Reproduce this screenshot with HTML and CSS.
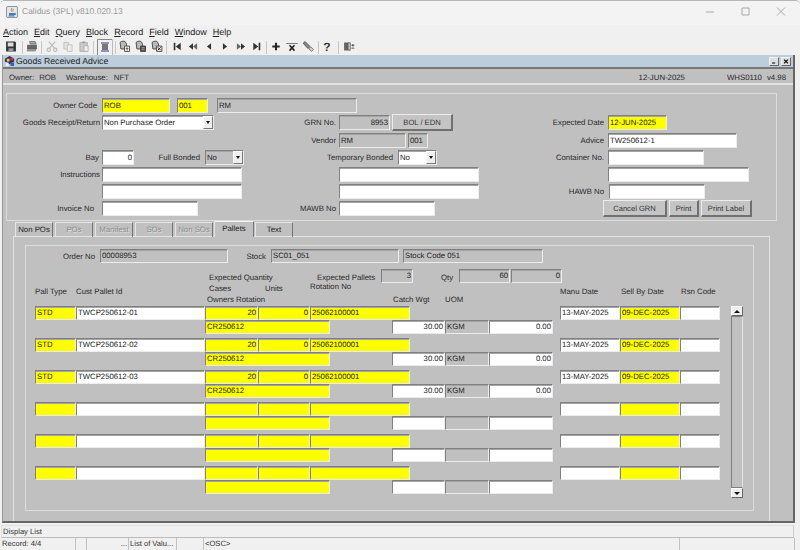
FILE: index.html
```html
<!DOCTYPE html>
<html lang="en">
<head>
<meta charset="utf-8">
<title>Calidus (3PL) v810.020.13</title>
<link rel="stylesheet" href="styles.css">
</head>
<body>
<div class="app">
  <header class="titlebar">
    <svg class="appicon" viewBox="0 0 12 12"><rect x=".5" y=".5" width="11" height="11" rx="1.5" fill="#dfe7ef" stroke="#8a97a3"/><path d="M3 7h5v2.5H3z" fill="#4a78b0"/><path d="M8 7.5h1.5v1H8M2.500 10h6" stroke="#4a78b0" fill="none"/><path d="M5.500 2c1 1.200-1 2 0 3.500M7 3c.6.800-.6 1.400 0 2.500" stroke="#d9741f" fill="none"/></svg>
    <span class="apptitle">Calidus (3PL) v810.020.13</span>
    <svg class="wincontrols" viewBox="0 0 90 10"><path d="M0 5h8M36 1h7v7h-7zM71 .5l8 8M79 .5l-8 8" stroke="#a8a8a8" fill="none"/></svg>
  </header>

  <nav class="menubar">
    <span><u>A</u>ction</span><span><u>E</u>dit</span><span><u>Q</u>uery</span><span><u>B</u>lock</span><span><u>R</u>ecord</span><span><u>F</u>ield</span><span><u>W</u>indow</span><span><u>H</u>elp</span>
  </nav>

  <div class="toolbar">
    <svg class="ti" viewBox="0 0 16 16"><path d="M2 2h11l1 1v11H2z" fill="#333"/><path d="M4 3h7v5H4z" fill="#ddd"/><path d="M5 10h6v4H5z" fill="#999"/></svg>
    <i class="sep s1"></i>
    <svg class="ti" viewBox="0 0 16 16"><path d="M5 2h7l1 3H6z" fill="#aaa" stroke="#444" stroke-width=".7"/><path d="M2 6h12v5H2z" fill="#666"/><path d="M3 11h10l-1 2.500H2z" fill="#aaa" stroke="#555" stroke-width=".6"/></svg>
    <i class="sep s2"></i>
    <svg class="ti" viewBox="0 0 16 16"><path d="M4 2l7 8M12 2l-7 8" stroke="#b8b8b8" stroke-width="1.300"/><circle cx="4" cy="12" r="2" fill="none" stroke="#b8b8b8" stroke-width="1.300"/><circle cx="12" cy="12" r="2" fill="none" stroke="#b8b8b8" stroke-width="1.300"/></svg>
    <svg class="ti" viewBox="0 0 16 16"><path d="M3 3h6v8H3z" fill="#e4e4e4" stroke="#bbb"/><path d="M7 6h6v8H7z" fill="#ececec" stroke="#bbb"/></svg>
    <svg class="ti" viewBox="0 0 16 16"><path d="M3 3h9v11H3z" fill="#ccc" stroke="#aaa"/><path d="M6 2h3v2H6z" fill="#999"/><path d="M8 7h5v7H8z" fill="#eee" stroke="#aaa"/></svg>
    <i class="sep s3"></i>
    <svg class="ti pressed" viewBox="0 0 16 16"><path d="M1 .5h14.500V16" stroke="#bbb" fill="none"/><path d="M.5 16V.5H15" stroke="#888" fill="none"/><path d="M4 3.500h8v1H4z" fill="#35358f"/><path d="M5 5h6v6H5z" fill="#777"/><path d="M4 11.500h8v1H4z" fill="#35358f"/></svg>
    <i class="sep s4"></i>
    <svg class="ti" viewBox="0 0 16 16"><path d="M2 3c2-2 6-2 7 0l1 3v5H3z" fill="#bbb" stroke="#333"/><path d="M7.500 7.500h6v6.500h-6z" fill="#fff" stroke="#333"/><path d="M10.500 13V9.500M9 11l1.500-1.500L12 11" stroke="#333" fill="none"/></svg>
    <svg class="ti" viewBox="0 0 16 16"><path d="M2 3c2-2 6-2 7 0l1 3v5H3z" fill="#bbb" stroke="#333"/><path d="M7.500 7.500h6v6.500h-6z" fill="#555" stroke="#333"/><path d="M9 9h1v1H9zM11 9h1v1h-1zM9 11h1v1H9zM11 11h1v1h-1z" fill="#ddd"/></svg>
    <svg class="ti" viewBox="0 0 16 16"><path d="M2 3c2-2 6-2 7 0l1 3v5H3z" fill="#bbb" stroke="#333"/><path d="M7.500 7.500h6.500v6.500H7.500z" fill="#eee" stroke="#333"/><path d="M9 9l3.500 3.500M12.500 9L9 12.500" stroke="#222" stroke-width="1.200"/></svg>
    <i class="sep s5"></i>
    <svg class="ti" viewBox="0 0 16 16"><path d="M4 3.500h2v9H4zM12.500 3.500v9L6.500 8z" fill="#333"/></svg>
    <svg class="ti" viewBox="0 0 16 16"><path d="M8 4v8L3 8z" fill="#333"/><path d="M13 4v8L8 8z" fill="#666"/></svg>
    <svg class="ti" viewBox="0 0 16 16"><path d="M10.500 4v8L5.500 8z" fill="#333"/></svg>
    <svg class="ti" viewBox="0 0 16 16"><path d="M5.500 4v8l5-4z" fill="#333"/></svg>
    <svg class="ti" viewBox="0 0 16 16"><path d="M3 4v8l5-4z" fill="#666"/><path d="M8 4v8l5-4z" fill="#333"/></svg>
    <svg class="ti" viewBox="0 0 16 16"><path d="M3.500 3.500v9l6-4.500zM10 3.500h2v9h-2z" fill="#333"/></svg>
    <i class="sep s6"></i>
    <svg class="ti" viewBox="0 0 16 16"><path d="M6.800 3.500h2.400v3.300h3.300v2.400H9.200v3.300H6.800V9.200H3.500V6.800h3.300z" fill="#222"/></svg>
    <svg class="ti" viewBox="0 0 16 16"><path d="M1 4h14v1H1z" fill="#555"/><path d="M5 6.500l6 6.500M11 6.500L5 13" stroke="#222" stroke-width="2"/></svg>
    <svg class="ti" viewBox="0 0 16 16"><path d="M2 4l2.500-2 6 6-2.500 2.500z" fill="#888" stroke="#333" stroke-width=".8"/><path d="M9 11l2.500-2.500 3 3-2 2.500z" fill="#ccc" stroke="#444" stroke-width=".7"/></svg>
    <i class="sep s7"></i>
    <span class="help">?</span>
    <i class="sep s8"></i>
    <svg class="ti" viewBox="0 0 16 16"><path d="M2 3h5v10H2z" fill="#666"/><path d="M7 3.500h2.500v9H7z" fill="#ddd" stroke="#555"/><path d="M11 6.500h3.500M12.700 5v3M11 10h3.500" stroke="#333" fill="none"/></svg>
  </div>

  <main class="child">
    <div class="childtitle">
      <svg class="childicon" viewBox="0 0 12 12"><path d="M1 3l5-3 5 3v3l-5 3-5-3z" fill="#2b2b6f"/><path d="M3 3h3v3H3z" fill="#f2d21a"/><path d="M7 2h3v3H7z" fill="#d33"/><path d="M2 7h3v4H2z" fill="#eee"/><path d="M7 7h4v4H7z" fill="#36a"/></svg>
      <span class="childname">Goods Received Advice</span>
      <span class="cbtn"><svg viewBox="0 0 9 9"><path d="M2 6.500h4" stroke="#000" stroke-width="1.400"/></svg></span>
      <span class="cbtn"><svg viewBox="0 0 9 9"><path d="M2 2l5 5M7 2L2 7" stroke="#000" stroke-width="1.400"/></svg></span>
    </div>

    <div class="infobar">
      <span class="i-owner">Owner:</span><span class="i-rob">ROB</span><span class="i-wh">Warehouse:</span><span class="i-nft">NFT</span>
      <span class="i-date">12-JUN-2025</span><span class="i-form">WHS0110</span><span class="i-ver">v4.98</span>
    </div>

    <div class="canvas">
      <section class="topframe">
        <div class="col col-left">
          <div class="row"><label class="lb pr5">Owner Code</label><div class="f y w68">ROB</div><div class="f y w31 ml7">001</div><div class="f g w140 ml9">RM</div></div>
          <div class="row"><label class="lb">Goods Receipt/Return</label><div class="f w w112 sel">Non Purchase Order<span class="drop"></span></div></div>
          <div class="row"></div>
          <div class="row"><label class="lb pr3">Bay</label><div class="f w w32 num">0</div><label class="lb-inline">Full Bonded</label><div class="f g w39 sel">No<span class="drop"></span></div></div>
          <div class="row"><label class="lb">Instructions</label><div class="f w w140"></div></div>
          <div class="row"><label class="lb"></label><div class="f w w140"></div></div>
          <div class="row"><label class="lb pr8">Invoice No</label><div class="f w w96"></div></div>
        </div>
        <div class="col col-mid">
          <div class="row"></div>
          <div class="row"><label class="lm">GRN No.</label><div class="f g w51 num">8953</div><button class="btn b-bol">BOL / EDN</button></div>
          <div class="row"><label class="lm">Vendor</label><div class="f g w67">RM</div><div class="f g w20 ml2">001</div></div>
          <div class="row"><label class="lm wide">Temporary Bonded</label><div class="f w w39 sel">No<span class="drop"></span></div></div>
          <div class="row"><label class="lm"></label><div class="f w w140"></div></div>
          <div class="row"><label class="lm"></label><div class="f w w140"></div></div>
          <div class="row"><label class="lm">MAWB No</label><div class="f w w96"></div></div>
        </div>
        <div class="col col-right">
          <div class="row"></div>
          <div class="row"><label class="lr">Expected Date</label><div class="f y w59">12-JUN-2025</div></div>
          <div class="row"><label class="lr">Advice</label><div class="f w w129">TW250612-1</div></div>
          <div class="row"><label class="lr">Container No.</label><div class="f w w96"></div></div>
          <div class="row"><label class="lr"></label><div class="f w w141"></div></div>
          <div class="row"><label class="lr">HAWB No</label><div class="f w w96 ml1"></div></div>
          <div class="row btnrow"><button class="btn b-cancel">Cancel GRN</button><button class="btn b-print">Print</button><button class="btn b-label">Print Label</button></div>
        </div>
      </section>

      <div class="tabs">
        <span class="tab">Non POs</span><span class="tab off">POs</span><span class="tab off t-man">Manifest</span><span class="tab off">SOs</span><span class="tab off">Non SOs</span><span class="tab on">Pallets</span><span class="tab">Text</span>
      </div>

      <section class="tabpanel">
        <div class="innerframe">
          <div class="orderrow">
            <label class="lo">Order No</label><div class="f g w128">00008953</div>
            <label class="ls">Stock</label><div class="f g w128">SC01_051</div><div class="f g w140 ml4">Stock Code 051</div>
          </div>
          <div class="headgrid">
            <span class="h c3 r1 ind2 sp">Expected Quantity</span>
            <span class="h c5 r1 ind7 sp">Expected Pallets</span>
            <div class="f g w32 c6 r1 num">3</div>
            <span class="h c8 r1">Qty</span>
            <div class="qty c10 r1"><div class="f g w51 num">60</div><div class="f g w51 num">0</div></div>
            <span class="h c3 r2 ind2">Cases</span>
            <span class="h c4 r2">Units</span>
            <span class="h c5 r2 up">Rotation No</span>
            <span class="h c1 r2 dn">Pall Type</span>
            <span class="h c2 r2 dn">Cust Pallet Id</span>
            <span class="h c11 r2 dn mdate">Manu Date</span>
            <span class="h c12 r2 dn">Sell By Date</span>
            <span class="h c13 r2 dn">Rsn Code</span>
            <span class="h c3 r3 sp">Owners Rotation</span>
            <span class="h c7 r3 sp">Catch Wgt</span>
            <span class="h c9 r3 sp">UOM</span>
          </div>
          <div class="tablewrap">
            <div class="records">
              <div class="rec">
                <div class="line1"><div class="f y">STD</div><div class="f w">TWCP250612-01</div><div class="f y num">20</div><div class="f y num">0</div><div class="f y">25062100001</div><i></i><div class="f w">13-MAY-2025</div><div class="f y">09-DEC-2025</div><div class="f w"></div></div>
                <div class="line2"><div class="f y">CR250612</div><i></i><div class="f w num">30.00</div><div class="f g">KGM</div><div class="f w num">0.00</div></div>
              </div>
              <div class="rec">
                <div class="line1"><div class="f y">STD</div><div class="f w">TWCP250612-02</div><div class="f y num">20</div><div class="f y num">0</div><div class="f y">25062100001</div><i></i><div class="f w">13-MAY-2025</div><div class="f y">09-DEC-2025</div><div class="f w"></div></div>
                <div class="line2"><div class="f y">CR250612</div><i></i><div class="f w num">30.00</div><div class="f g">KGM</div><div class="f w num">0.00</div></div>
              </div>
              <div class="rec">
                <div class="line1"><div class="f y">STD</div><div class="f w">TWCP250612-03</div><div class="f y num">20</div><div class="f y num">0</div><div class="f y">25062100001</div><i></i><div class="f w">13-MAY-2025</div><div class="f y">09-DEC-2025</div><div class="f w"></div></div>
                <div class="line2"><div class="f y">CR250612</div><i></i><div class="f w num">30.00</div><div class="f g">KGM</div><div class="f w num">0.00</div></div>
              </div>
              <div class="rec">
                <div class="line1"><div class="f y"></div><div class="f w"></div><div class="f y"></div><div class="f y"></div><div class="f y"></div><i></i><div class="f w"></div><div class="f y"></div><div class="f w"></div></div>
                <div class="line2"><div class="f y"></div><i></i><div class="f w"></div><div class="f g"></div><div class="f w"></div></div>
              </div>
              <div class="rec">
                <div class="line1"><div class="f y"></div><div class="f w"></div><div class="f y"></div><div class="f y"></div><div class="f y"></div><i></i><div class="f w"></div><div class="f y"></div><div class="f w"></div></div>
                <div class="line2"><div class="f y"></div><i></i><div class="f w"></div><div class="f g"></div><div class="f w"></div></div>
              </div>
              <div class="rec">
                <div class="line1"><div class="f y"></div><div class="f w"></div><div class="f y"></div><div class="f y"></div><div class="f y"></div><i></i><div class="f w"></div><div class="f y"></div><div class="f w"></div></div>
                <div class="line2"><div class="f y"></div><i></i><div class="f w"></div><div class="f g"></div><div class="f w"></div></div>
              </div>
            </div>
            <div class="scroll"><span class="sb up-arrow"></span><span class="track"></span><span class="sb down-arrow"></span></div>
          </div>
        </div>
      </section>
    </div>
  </main>

  <footer class="status">
    <div class="hint">Display List</div>
    <div class="stat">
      <span class="st1">Record: 4/4</span><span class="st2"></span><span class="st3">...</span><span class="st4">List of Valu...</span><span class="st5"></span><span class="st6">&lt;OSC&gt;</span><span class="st7"></span>
    </div>
  </footer>
</div>
</body>
</html>
```
FILE: styles.css
```css
* { box-sizing: border-box; }
html, body { margin: 0; padding: 0; background: #f0f0f0; }
body { font: 7.8px/11px "Liberation Sans", Arial, sans-serif; color: #2a2a2a; text-rendering: geometricPrecision; }
.app { width: 800px; height: 550px; overflow: hidden; display: flex; flex-direction: column; background: #f0f0f0; border-top: 1px solid #b5b5b5; border-radius: 5px 5px 0 0; }

/* window chrome */
.titlebar { flex: 0 0 24px; display: flex; align-items: center; padding: 0 0 3px 6px; background: #f3f3f3; }
.appicon { width: 12px; height: 12px; }
.apptitle { margin-left: 4px; font-size: 8.5px; color: #9a9a9a; }
.wincontrols { width: 90px; height: 10px; margin-left: auto; margin-right: 4px; }
.menubar { flex: 0 0 14px; display: flex; align-items: center; padding-left: 3px; gap: 6px; font-size: 9px; color: #222; }
.toolbar { flex: 0 0 16px; display: flex; align-items: center; padding-left: 3px; }
.ti { width: 16px; height: 16px; flex: none; transform: translateY(-.5px) scale(.82); }
.ti.pressed { transform: none; }
.sep { width: 1px; height: 13px; background: #c8c8c8; flex: none; }
.s1 { margin: 0 1px 0 3px; }
.s2 { margin: 0 2px 0 1px; }
.s3 { margin: 0 3px 0 1px; }
.s4 { margin: 0 1px 0 2px; }
.s5 { margin: 0 2px 0 1px; }
.s6 { margin: 0 1px 0 1px; }
.s7 { margin: 0 0 0 2px; }
.s8 { margin: 0 2px 0 3px; }
.help { width: 16px; text-align: center; font: bold 12px/15px "Liberation Sans", sans-serif; color: #333; }

/* MDI child */
.child { width: 793px; margin-left: 2px; flex: 0 0 468px; display: flex; flex-direction: column; border-right: 2px solid #666; border-bottom: 2px solid #666; border-left: 1px solid #999; background: #c0c0c0; }
.childtitle { flex: 0 0 14px; display: flex; align-items: center; background: #bccddb; border-bottom: 2px solid #777; padding: 0 2px 0 0; font-size: 8.7px; color: #222; }
.childicon { width: 11px; height: 11px; margin-left: 1px; }
.childname { margin: 0 auto 0 1px; }
.cbtn { width: 10px; height: 9px; margin-left: 2px; background: #dedede; border: 1px solid; border-color: #f4f4f4 #666 #666 #f4f4f4; display: block; }
.cbtn svg { display: block; width: 8px; height: 7px; }
.infobar { flex: 0 0 15px; display: flex; align-items: center; border-bottom: 2px solid #e2e2e2; padding: 3px 0 0 6px; }
.i-rob { margin-left: 5px; }
.i-wh { margin-left: 10px; }
.i-nft { margin-left: 6px; }
.i-date { margin-left: auto; margin-right: 42px; }
.i-ver { margin-left: 5px; margin-right: 7px; }

.canvas { flex: 1; display: flex; flex-direction: column; }
.topframe { width: 771px; height: 128px; margin: 8px 0 0 3px; border: 1px solid #dcdcdc; display: flex; padding-top: 4px; }
.col { display: grid; grid-template-rows: 17px 18px 17px 17px 17px 17px 17px; }
.col-left { width: 283px; }
.col-mid { width: 200px; }
.col-right { flex: 1; }
.row { display: flex; align-items: flex-start; }

.lb { width: 95px; text-align: right; padding-right: 2px; line-height: 16px; flex: none; }
.pr3 { padding-right: 3px; }
.pr5 { padding-right: 5px; }
.pr8 { padding-right: 8px; }
.lb-inline { width: 71px; padding-right: 5px; text-align: right; line-height: 16px; flex: none; }
.lm { width: 49px; text-align: right; padding-right: 3px; line-height: 16px; flex: none; white-space: nowrap; }
.lm.wide { width: 108px; padding-right: 5px; }
.lr { width: 118px; text-align: right; padding-right: 4px; line-height: 16px; flex: none; }

/* fields */
.f { height: 15px; padding: 0 1px; font-size: 7.75px; line-height: 11px; color: #222; border: 1px solid; border-color: #808080 #ececec #ececec #808080; box-shadow: inset 0 1px 0 #a4a4a4; padding-top: 1px; white-space: nowrap; overflow: hidden; flex: none; }
.y { background: #ffff00; }
.w { background: #fff; }
.g { background: #c0c0c0; }
.num { text-align: right; }
.w20 { width: 20px; } .w31 { width: 31px; } .w32 { width: 32px; } .w39 { width: 39px; }
.w51 { width: 51px; } .w59 { width: 59px; } .w67 { width: 67px; } .w68 { width: 68px; }
.w96 { width: 96px; } .w112 { width: 112px; } .w128 { width: 128px; } .w129 { width: 129px; }
.w140 { width: 140px; } .w141 { width: 141px; }
.ml1 { margin-left: 1px; } .ml2 { margin-left: 2px; } .ml4 { margin-left: 4px; } .ml7 { margin-left: 7px; } .ml9 { margin-left: 9px; }
.sel { position: relative; }
.drop { position: absolute; top: 0; right: 0; width: 10px; height: 13px; background: #efefef; border: 1px solid; border-color: #fff #777 #777 #fff; }
.drop::after { content: ""; position: absolute; left: 2px; top: 4px; border: 2.500px solid transparent; border-top: 3px solid #111; border-bottom: 0; }

.btn { height: 17px; padding: 0; font: 7.6px/13px "Liberation Sans", sans-serif; text-rendering: geometricPrecision; color: #333; background: #c4c4c4; border: 1px solid; border-width: 1px 2px 2px 1px; border-color: #ececec #707070 #707070 #ececec; flex: none; }
.b-bol { width: 61px; margin: -1px 0 0 2px; }
.btnrow { margin: -1px 0 0 113px; gap: 2px; }
.b-cancel { width: 64px; }
.b-print { width: 30px; }
.b-label { width: 51px; }

/* tabs */
.tabs { flex: 0 0 16px; display: flex; margin: 0 0 0 12px; align-items: flex-end; position: relative; }
.tab { width: 38px; height: 15px; margin-right: 2px; text-align: center; line-height: 14px; color: #222; border: 1px solid; border-width: 1px 1px 0 1px; border-color: #e6e6e6 #777 #c0c0c0 #e6e6e6; }
.tab.off { color: #8e8e8e; text-shadow: 1px 1px 0 #dedede; }
.tab.on { width: 40px; height: 16px; margin: 0 1px 0 -1px; position: relative; z-index: 1; background: #c0c0c0; border-top-color: #f4f4f4; }
.tabpanel { width: 757px; flex: 1; margin: -1px 0 0 10px; padding: 8px 15px 0 11px; border: 1px solid; border-bottom: 0; border-color: #e2e2e2; }
.innerframe { width: 729px; height: 266px; padding: 3px 0 0 9px; border: 1px solid #dcdcdc; }
.orderrow { display: flex; align-items: flex-start; height: 14px; }
.orderrow .f { height: 14px; padding-top: 0; }
.lo { width: 65px; padding-right: 5px; text-align: right; line-height: 15px; flex: none; }
.ls { width: 43px; padding-right: 5px; text-align: right; line-height: 15px; flex: none; }

.headgrid { display: grid; height: 37px; margin-top: 6px; grid-template-columns: 41px 131px 58px 45px 71px 12px 48px 4px 14px 101px 61px 60px 40px; grid-template-rows: 14px 11px 12px; white-space: nowrap; }
.h { display: block; }
.headgrid .f { height: 14px; width: 32px; padding-top: 0; }
.c1 { grid-column: 1; } .c2 { grid-column: 2; } .c3 { grid-column: 3; } .c4 { grid-column: 4; } .c5 { grid-column: 5; }
.c6 { grid-column: 6 / span 3; } .c7 { grid-column: 7; } .c8 { grid-column: 8 / span 2; } .c9 { grid-column: 9 / span 2; } .c10 { grid-column: 10 / span 2; }
.c11 { grid-column: 11; } .c12 { grid-column: 12; } .c13 { grid-column: 13; }
.r1 { grid-row: 1; align-self: end; } .r2 { grid-row: 2; } .r3 { grid-row: 3; }
.headgrid .f.r1 { align-self: start; }
.ind2 { margin-left: 2px; } .ind7 { margin-left: 7px; }
.up { margin-top: -2px; }
.dn { margin-top: 3px; }
.qty { display: flex; gap: 1px; }
.qty .f.f { width: 51px; }

.tablewrap { display: flex; align-items: flex-start; }
.records { width: 696px; display: flex; flex-direction: column; gap: 4px; }
.line1 { display: grid; height: 14px; grid-template-columns: 41px 129px 53px 52px 100px 150px 60px 60px 40px; }
.line2 { display: grid; height: 14px; grid-template-columns: 170px 125px 62px 53px 44px 64px; }
.line2::before { content: ""; }
.rec .f { height: 14px; padding-top: 0; }
.scroll { width: 12px; height: 192px; display: flex; flex-direction: column; }
.sb { height: 10px; flex: none; background: #efefef; border: 1px solid; border-color: #fff #666 #666 #fff; position: relative; }
.sb::after { content: ""; position: absolute; left: 2px; top: 3px; border: 3px solid transparent; }
.up-arrow::after { border-bottom-color: #111; border-top: 0; }
.down-arrow::after { border-top-color: #111; border-bottom: 0; }
.track { flex: 1; background: #c0c0c0; border: 1px solid; border-color: #808080 #e4e4e4 #808080 #808080; }

/* status */
.status { flex: 0 0 27px; padding: 2px 0 0 1px; background: #f0f0f0; color: #333; font-size: 7.6px; }
.hint { height: 13px; width: 793px; border: 1px solid; border-color: #e0e0e0 #ccc #bbb #e0e0e0; line-height: 12px; padding-left: 1px; }
.stat { display: flex; height: 12px; line-height: 12px; }
.stat span { border-right: 1px solid #c2c2c2; padding-left: 1px; white-space: nowrap; flex: none; }
.st1 { width: 75px; }
.st2 { width: 11px; }
.st3 { width: 42px; text-align: right; padding-right: 1px; }
.st4 { width: 48px; }
.st5 { width: 27px; }
.st6 { width: 476px; padding-left: 2px; }
.st7 { width: 115px; border-right: 0; }
```
